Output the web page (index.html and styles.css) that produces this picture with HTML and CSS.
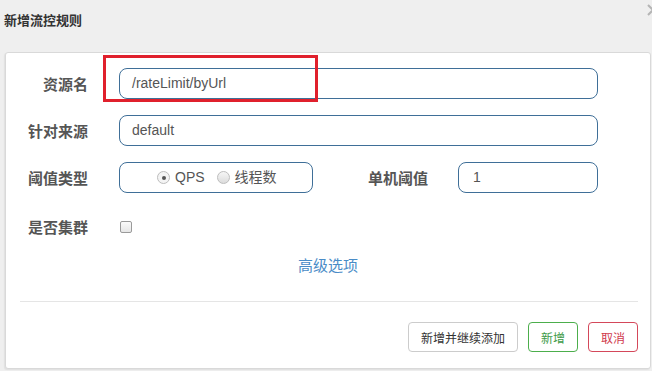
FILE: index.html
```html
<!DOCTYPE html>
<html lang="zh">
<head>
<meta charset="utf-8">
<title>新增流控规则</title>
<link rel="stylesheet" href="styles.css">
</head>
<body>
<div class="dialog">
  <div class="header">
    <h4 class="title">新增流控规则</h4>
    <svg class="close" width="14" height="14" viewBox="0 0 14 14"><path d="M2 2 L12 12 M12 2 L2 12" stroke="#b5b5b5" stroke-width="2" fill="none"/></svg>
  </div>
  <div class="panel">
    <div class="form">
      <div class="row">
        <label class="label">资源名</label>
        <div class="field"><div class="input">/rateLimit/byUrl</div></div>
      </div>
      <div class="row">
        <label class="label">针对来源</label>
        <div class="field"><div class="input">default</div></div>
      </div>
      <div class="row">
        <label class="label">阈值类型</label>
        <div class="field split">
          <div class="input radios">
            <span class="radio checked"></span><span class="rtext">QPS</span>
            <span class="radio"></span><span class="rtext">线程数</span>
          </div>
          <label class="label sub">单机阈值</label>
          <div class="input small">1</div>
        </div>
      </div>
      <div class="row check-row">
        <label class="label">是否集群</label>
        <div class="field"><span class="checkbox"></span></div>
      </div>
      <div class="advanced">高级选项</div>
    </div>
    <div class="footer">
      <button class="btn">新增并继续添加</button>
      <button class="btn btn-ok">新增</button>
      <button class="btn btn-cancel">取消</button>
    </div>
  </div>
  <div class="highlight"></div>
</div>
</body>
</html>
```
FILE: styles.css
```css
* { box-sizing: border-box; }
html, body { margin: 0; padding: 0; }
body {
  background: #efefef;
  font-family: "Liberation Sans", "Noto Sans CJK SC", sans-serif;
  width: 652px;
  height: 371px;
  overflow: hidden;
}
.dialog { position: relative; width: 652px; height: 371px; }
.header {
  position: relative;
  height: 52px;
  padding: 13px 0 0 4px;
}
.title {
  margin: 0;
  font-size: 13px;
  font-weight: bold;
  color: #333;
  line-height: 16px;
}
.close { position: absolute; right: -8px; top: 3px; }
.panel {
  margin-left: 5px;
  width: 646px;
  height: 317px;
  background: #fff;
  border: 1px solid #d9d9d9;
  border-radius: 3px;
  box-shadow: -1px 1px 1px #e0e0e0;
  padding-top: 15px;
}
.form { padding-right: 52px; }
.row {
  display: grid;
  grid-template-columns: 82px 1fr;
  column-gap: 31px;
  align-items: center;
  margin-bottom: 16px;
  height: 31px;
}
.label {
  text-align: right;
  font-size: 15px;
  font-weight: bold;
  color: #555;
  white-space: nowrap;
}
.input {
  height: 31px;
  border: 1px solid #3f6f98;
  border-radius: 8px;
  padding: 0 12px;
  font-size: 14px;
  color: #555;
  line-height: 29px;
}
.split { display: flex; align-items: center; }
.radios {
  width: 194px;
  height: 31px;
  display: flex;
  align-items: center;
  padding-left: 37px;
}
.radio {
  width: 13px;
  height: 13px;
  border-radius: 50%;
  border: 1px solid #bdbdbd;
  background: linear-gradient(#f6f6f6, #dcdcdc);
  margin-right: 5px;
  position: relative;
}
.radio.checked { background: #f4f4f4; }
.radio.checked::after {
  content: "";
  position: absolute;
  left: 3.5px; top: 3.5px;
  width: 4px; height: 4px;
  border-radius: 50%;
  background: #555;
}
.rtext { margin-right: 12px; color: #555; }
.sub { flex: 1; padding-right: 30px; }
.small { width: 140px; padding-left: 14px; }
.check-row { margin-top: 18px; margin-bottom: 14px; }
.checkbox {
  display: block;
  width: 12px;
  height: 12px;
  margin-left: 1px;
  border: 1px solid #9a9a9a;
  border-radius: 2px;
  background: linear-gradient(#fbfbfb, #e6e6e6);
}
.advanced {
  text-align: center;
  font-size: 15px;
  color: #4a8cc7;
  margin: 0 0 0 52px;
  line-height: 20px;
}
.footer {
  margin: 25px 12px 0 14px;
  border-top: 1px solid #e5e5e5;
  padding-top: 20px;
  display: flex;
  justify-content: flex-end;
  gap: 10px;
}
.btn {
  height: 30px;
  padding: 0 12px;
  font-family: "Liberation Sans", "Noto Sans CJK SC", sans-serif;
  font-size: 12px;
  color: #333;
  background: #fff;
  border: 1px solid #ccc;
  border-radius: 4px;
}
.btn-ok { color: #3d9a48; border-color: #4cae4c; width: 50px; }
.btn-cancel { color: #d0394d; border-color: #d4485a; width: 50px; }
.highlight {
  position: absolute;
  left: 103px;
  top: 55px;
  width: 215px;
  height: 47px;
  border: 3px solid #e0202c;
}
```
